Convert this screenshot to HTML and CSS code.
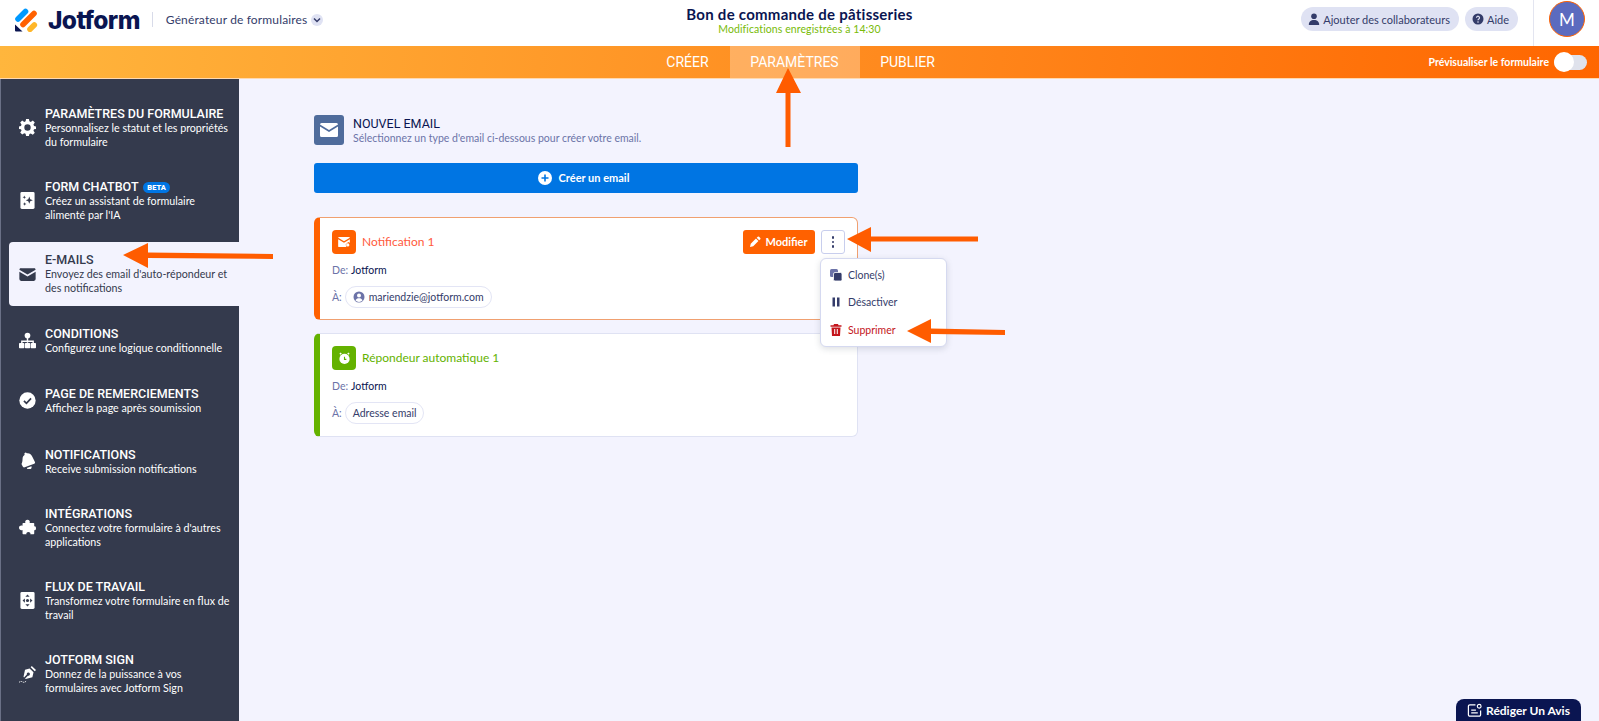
FILE: index.html
```html
<!DOCTYPE html>
<html lang="fr">
<head>
<meta charset="utf-8">
<title>Jotform</title>
<link rel="stylesheet" href="styles.css">
</head>
<body>
<header class="top">
  <div class="top-left">
    <svg class="logo" viewBox="0 0 24 24" width="24" height="24"><g fill="none" stroke-width="5.6" stroke-linecap="round"><path stroke="#0099ff" d="M4 11 11.500 3.500"/><path stroke="#ff6100" d="M9 16.500 20 5.500"/><path stroke="#ffb629" d="M16 21.300 20.300 17"/></g><path fill="#0a1551" d="M1 16.500v6a1 1 0 0 0 1 1h6.500z"/></svg>
    <span class="wordmark">Jotform</span>
    <span class="top-sep"></span>
    <span class="builder">Générateur de formulaires</span>
    <span class="chev"><svg viewBox="0 0 12 12" width="12" height="12"><path d="M3 4.500 6 7.500 9 4.500" fill="none" stroke="#343c6a" stroke-width="1.500"/></svg></span>
  </div>
  <div class="top-mid">
    <div class="form-title">Bon de commande de pâtisseries</div>
    <div class="saved">Modifications enregistrées à 14:30</div>
  </div>
  <div class="top-right">
    <span class="pill"><svg viewBox="0 0 12 12" width="12" height="12"><circle cx="6" cy="3.200" r="2.800" fill="#343c6a"/><path d="M.8 12c0-3.500 2-5 5.200-5s5.200 1.500 5.200 5z" fill="#343c6a"/></svg>Ajouter des collaborateurs</span>
    <span class="pill"><svg viewBox="0 0 12 12" width="12" height="12"><circle cx="6" cy="6" r="5.500" fill="#343c6a"/><path d="M4.500 4.700a1.500 1.500 0 1 1 2.300 1.300C6.200 6.400 6 6.700 6 7.300" fill="none" stroke="#dfe2f3" stroke-width="1.200"/><circle cx="6" cy="9" r=".8" fill="#dfe2f3"/></svg>Aide</span>
    <span class="vline"></span>
    <span class="avatar">M</span>
  </div>
</header>

<nav class="bar">
  <div class="bar-side"></div>
  <div class="tabs">
    <span class="tab tab-first">CRÉER</span>
    <span class="tab tab-on">PARAMÈTRES</span>
    <span class="tab tab-last">PUBLIER</span>
  </div>
  <div class="bar-side bar-end">
    <span class="preview">Prévisualiser le formulaire</span>
    <span class="toggle"><span class="knob"></span></span>
  </div>
</nav>

<div class="body">
  <aside class="side">
    <div class="item">
      <svg class="ic" viewBox="0 0 24 24"><path fill="#fff" fill-rule="evenodd" d="M10 0h4l.7 3.300 1.900.8L19.500 2.200l2.800 2.800-1.900 2.900.8 1.900L24 10.500v3.500l-2.800.6-.8 1.900 1.900 2.900-2.800 2.800-2.900-1.900-1.900.8L14 24h-4l-.7-3.200-1.900-.8-2.900 1.900-2.800-2.800 1.900-2.900-.8-1.900L0 14v-3.500l2.800-.6.800-1.900L1.700 5l2.800-2.800 2.900 1.900 1.900-.8zM12 7.500a4.500 4.500 0 1 0 0 9 4.500 4.500 0 0 0 0-9z"/></svg>
      <div class="txt"><div class="t">PARAMÈTRES DU FORMULAIRE</div><div class="d">Personnalisez le statut et les propriétés du formulaire</div></div>
    </div>
    <div class="item item-up">
      <svg class="ic" viewBox="0 0 24 24"><rect x="2" y="0" width="20" height="24" rx="2" fill="#fff"/><path fill="#343a4d" d="M14.500 6.500l1.400 3.600 3.600 1.400-3.600 1.400-1.400 3.600-1.400-3.600-3.600-1.400 3.600-1.400zM7.500 5l.7 1.800 1.800.7-1.800.7L7.500 10l-.7-1.800L5 7.500l1.800-.7zM8 14.500l.8 1.700 1.700.8-1.700.8L8 19.500l-.8-1.700-1.700-.8 1.700-.8z"/></svg>
      <div class="txt"><div class="t">FORM CHATBOT <span class="beta">BETA</span></div><div class="d">Créez un assistant de formulaire alimenté par l'IA</div></div>
    </div>
    <div class="item item-on item-up">
      <svg class="ic" viewBox="0 0 24 24"><path fill="#343a4d" d="M3 3h18a2.500 2.500 0 0 1 2.500 2.300L12 12 .5 5.300A2.500 2.500 0 0 1 3 3zM.5 8 12 14.700 23.500 8v10.500A2.500 2.500 0 0 1 21 21H3a2.500 2.500 0 0 1-2.500-2.500z"/></svg>
      <div class="txt"><div class="t">E-MAILS</div><div class="d">Envoyez des email d'auto-répondeur et des notifications</div></div>
    </div>
    <div class="item item-s item-up">
      <svg class="ic" viewBox="0 0 24 24"><circle cx="12" cy="5" r="4" fill="#fff"/><path fill="none" stroke="#fff" stroke-width="2" d="M12 8v7M4 16v-3h16v3"/><rect x="0" y="15.500" width="7.500" height="7.500" rx="1" fill="#fff"/><rect x="8.300" y="15.500" width="7.500" height="7.500" rx="1" fill="#fff"/><rect x="16.500" y="15.500" width="7.500" height="7.500" rx="1" fill="#fff"/></svg>
      <div class="txt"><div class="t">CONDITIONS</div><div class="d">Configurez une logique conditionnelle</div></div>
    </div>
    <div class="item item-s item-page">
      <svg class="ic" viewBox="0 0 24 24"><circle cx="12" cy="12" r="11.500" fill="#fff"/><path d="M7 12.500 10.500 16 17 9" fill="none" stroke="#343a4d" stroke-width="2.400"/></svg>
      <div class="txt"><div class="t">PAGE DE REMERCIEMENTS</div><div class="d">Affichez la page après soumission</div></div>
    </div>
    <div class="item item-s">
      <svg class="ic" viewBox="0 0 24 24"><path fill="#fff" d="M8 1.500a2 2 0 0 1 3 .2c4-.5 6.500 1.800 8 5.300l3.500 7c.5 1.300 0 2.200-1 2.700l-13.500 5c-1 .3-2 0-2.500-1L3.500 17c1-2 1.500-4 1.500-7 0-3 1.500-5 3.200-6a2 2 0 0 1-.2-2.500zM11 22.500l6.500-2.400a3.400 3.400 0 0 1-6.500 2.400z"/></svg>
      <div class="txt"><div class="t">NOTIFICATIONS</div><div class="d">Receive submission notifications</div></div>
    </div>
    <div class="item">
      <svg class="ic" viewBox="0 0 24 24"><path fill="#fff" d="M9 5.500C8 3 9.500 1 12 1s4 2 3 4.500h5.500a1 1 0 0 1 1 1v4c1.500-.8 2.500.5 2.500 2.500s-1 3.300-2.500 2.500v5a1 1 0 0 1-1 1H16c.7-2-.7-3.300-2.700-3.300s-3.500 1.300-2.800 3.300H6a1 1 0 0 1-1-1v-5C3 16.500 0 15.500 0 12.500S3 8.500 5 9.500v-3a1 1 0 0 1 1-1z"/></svg>
      <div class="txt"><div class="t">INTÉGRATIONS</div><div class="d">Connectez votre formulaire à d'autres applications</div></div>
    </div>
    <div class="item item-up">
      <svg class="ic" viewBox="0 0 24 24"><rect x="2" y="0" width="20" height="24" rx="2" fill="#fff"/><path fill="#343a4d" d="M12 3.500l3 3.300h-6zM12 20.500l-3-3.300h6zM5 12l3.300-3v6zM19 12l-3.300 3V9z"/><circle cx="12" cy="12" r="2.200" fill="#343a4d"/></svg>
      <div class="txt"><div class="t">FLUX DE TRAVAIL</div><div class="d">Transformez votre formulaire en flux de travail</div></div>
    </div>
    <div class="item item-up">
      <svg class="ic" viewBox="0 0 24 24"><path fill="#fff" d="M18 0l6 5.500-1.800 1.800-5.700-5.500z"/><path fill="#fff" fill-rule="evenodd" d="M15 3.500l5.500 5.300-1.600 7L9.500 18.500l-.9-.9 4-4a2.200 2.200 0 1 0-1.500-1.500l-4 4-.7-.8L8.500 5.300z"/><path fill="none" stroke="#fff" stroke-width="1.200" stroke-dasharray="2 1" d="M0 23c2-1.500 3.500-1.500 5-.5s3.500.5 5-1"/></svg>
      <div class="txt"><div class="t">JOTFORM SIGN</div><div class="d">Donnez de la puissance à vos formulaires avec Jotform Sign</div></div>
    </div>
  </aside>

  <main class="main">
    <div class="col">
      <div class="new">
        <span class="new-ic"><svg viewBox="0 0 18 14" width="18" height="14"><path fill="#fff" d="M1.500 0h15A1.500 1.500 0 0 1 18 1.500L9 7 0 1.500A1.500 1.500 0 0 1 1.500 0zM0 3.500 9 9l9-5.500v9a1.500 1.500 0 0 1-1.500 1.500h-15A1.500 1.500 0 0 1 0 12.500z"/></svg></span>
        <div>
          <div class="new-t">NOUVEL EMAIL</div>
          <div class="new-d">Sélectionnez un type d'email ci-dessous pour créer votre email.</div>
        </div>
      </div>
      <button class="create"><svg viewBox="0 0 14 14" width="14" height="14"><circle cx="7" cy="7" r="7" fill="#fff"/><path d="M7 3.500v7M3.500 7h7" stroke="#0075e3" stroke-width="1.600"/></svg>Créer un email</button>

      <section class="card card-o">
        <div class="card-h">
          <span class="badge badge-o"><svg viewBox="0 0 14 12" width="12" height="10"><path fill="#fff" d="M1 0h12a1 1 0 0 1 1 1L7 5 0 1a1 1 0 0 1 1-1zM0 2.800l7 4 7-4V7l-2-1-3 3 .8 3H1a1 1 0 0 1-1-1z"/><circle cx="11.500" cy="9.500" r="2" fill="#fff"/></svg></span>
          <span class="name name-o">Notification 1</span>
          <span class="edit"><svg viewBox="0 0 12 12" width="11" height="11"><path fill="#fff" d="M8.500.8a1 1 0 0 1 1.400 0l1.300 1.300a1 1 0 0 1 0 1.400L10 4.700 7.300 2zM6.500 2.800 9.200 5.500 3.500 11.200 0 12l.8-3.500z"/></svg>Modifier</span>
          <span class="more"><i></i><i></i><i></i></span>
        </div>
        <div class="line"><span class="k">De:</span><span class="v">Jotform</span></div>
        <div class="line"><span class="k">À:</span><span class="chip"><svg viewBox="0 0 12 12" width="12" height="12"><circle cx="6" cy="6" r="5.500" fill="#6c73a8"/><circle cx="6" cy="4.500" r="2" fill="#fff"/><path d="M2.500 9.500c.5-1.700 2-2.300 3.500-2.300s3 .6 3.500 2.300A5 5 0 0 1 6 11a5 5 0 0 1-3.500-1.500z" fill="#fff"/></svg>mariendzie@jotform.com</span></div>
      </section>

      <section class="card card-g">
        <div class="card-h">
          <span class="badge badge-g"><svg viewBox="0 0 14 14" width="13" height="13"><circle cx="7" cy="7.500" r="5.500" fill="#fff"/><path d="M2 2.500 3.500 1M12 2.500 10.500 1" stroke="#fff" stroke-width="1.600"/><path d="M7 5v3h2" fill="none" stroke="#64b200" stroke-width="1.200"/></svg></span>
          <span class="name name-g">Répondeur automatique 1</span>
        </div>
        <div class="line"><span class="k">De:</span><span class="v">Jotform</span></div>
        <div class="line"><span class="k">À:</span><span class="chip">Adresse email</span></div>
      </section>
    </div>

    <div class="menu">
      <div class="mi"><svg viewBox="0 0 12 12" width="12" height="12"><rect x="0" y="0" width="8" height="8" rx="1.500" fill="#6c73a8"/><rect x="3.500" y="3.500" width="8.500" height="8.500" rx="1.500" fill="#343c6a" stroke="#fff" stroke-width=".8"/></svg>Clone(s)</div>
      <div class="mi"><svg viewBox="0 0 12 12" width="12" height="12"><rect x="2.500" y="1.500" width="2.500" height="9" fill="#343c6a"/><rect x="7" y="1.500" width="2.500" height="9" fill="#343c6a"/></svg>Désactiver</div>
      <div class="mi mi-del"><svg viewBox="0 0 12 12" width="12" height="12"><path fill="#c4161c" d="M4 0h4l.5 1.300H11.500v1.400H.5V1.300h3zM1.500 3.500h9L10 12H2zM4.200 5v5h1V5zM6.800 5v5h1V5z"/></svg>Supprimer</div>
    </div>
  </main>
</div>

<div class="review"><svg viewBox="0 0 16 16" width="15" height="15"><path fill="none" stroke="#fff" stroke-width="1.300" d="M9 2H3a1.500 1.500 0 0 0-1.500 1.500v9A1.500 1.500 0 0 0 3 14h10a1.500 1.500 0 0 0 1.500-1.500V8M4.500 7.500h5M4.500 10.500h7"/><circle cx="13" cy="3.500" r="2" fill="none" stroke="#fff" stroke-width="1.200"/></svg>Rédiger Un Avis</div>

<svg class="arrows" width="1599" height="721" viewBox="0 0 1599 721">
  <g fill="#ff5c00">
    <path d="M788 68 801 93H790.500V147H785.500V93H776z"/>
    <path d="M123 255 148 243V252.500L273 254V259L148 258V268z"/>
    <path d="M847 239 871 227V236.500H978V241.500H871V252z"/>
    <path d="M907 331 931 319V328.500L1005 330V335L931 334V343z"/>
  </g>
</svg>
</body>
</html>
```

FILE: styles.css
```css
* { box-sizing: border-box; }
html, body { margin: 0; height: 721px; overflow: hidden; }
body { font-family: "Lato", "Liberation Sans", sans-serif; background: #f3f3fe; color: #0a1551; position: relative; }

.top { height: 46px; background: #fff; display: grid; grid-template-columns: 1fr auto 1fr; align-items: center; }
.top-left { display: flex; align-items: center; padding: 0 0 7px 14px; }
.logo { display: block; }
.wordmark { font-family: "Inter", sans-serif; font-weight: 800; font-size: 24.500px; letter-spacing: -.6px; margin-left: 10px; color: #0a1551; }
.top-sep { width: 1px; height: 15px; background: #d8dbe9; margin: 0 13px 0 12px; }
.builder { font-size: 12px; color: #343c6a; letter-spacing: .15px; }
.chev { width: 12px; height: 12px; border-radius: 50%; background: #dfe2f3; margin-left: 4px; display: flex; }
.top-mid { text-align: center; align-self: start; padding-top: 4px; }
.form-title { font-weight: 700; font-size: 15px; line-height: 20px; letter-spacing: .26px; }
.saved { font-size: 10.500px; line-height: 10px; color: #78bb07; letter-spacing: .09px; }
.top-right { display: flex; align-items: flex-start; justify-content: flex-end; height: 46px; padding-right: 14px; }
.pill { height: 24px; margin-top: 7px; margin-right: 6px; padding: 0 9px 0 7px; border-radius: 12px; background: #dfe2f3; display: flex; align-items: center; gap: 3px; font-size: 11px; color: #343c6a; }
.vline { width: 1px; height: 46px; background: #e3e5f0; margin: 0 15px 0 9px; }
.avatar { width: 36px; height: 36px; margin-top: 1px; border-radius: 50%; background: #5b6bbf; border: 1px solid #ff6100; color: #fff; font-size: 17px; display: flex; align-items: center; justify-content: center; }

.bar { height: 33px; display: grid; grid-template-columns: 1fr auto 1fr; background: linear-gradient(95deg, #ffb63d 0%, #ff8a1e 55%, #ff6600 100%); border-bottom: 1px solid #ffd9b0; }
.tabs { display: flex; }
.tab { height: 32px; display: flex; align-items: center; justify-content: center; font-family: "Roboto", sans-serif; font-size: 14px; color: #fff; }
.tab-first { width: 84px; }
.tab-on { width: 130px; background: rgba(255,255,255,.28); }
.tab-last { width: 94px; padding-left: 2px; }
.bar-end { display: flex; align-items: center; justify-content: flex-end; padding-right: 12px; height: 32px; }
.preview { font-size: 10.500px; font-weight: 700; color: #fff; margin-right: 5px; }
.toggle { width: 33px; height: 15px; border-radius: 8px; background: #dfe2ec; display: flex; align-items: center; }
.knob { width: 20px; height: 20px; border-radius: 50%; background: #fff; }

.body { display: flex; height: 642px; }
.side { width: 239px; flex: none; background: #343a4d; border-left: 1px solid #6a7086; padding: 16px 0 0 8px; display: flex; flex-direction: column; gap: 9.500px; overflow: hidden; }
.item { min-height: 64px; padding-left: 10px; display: flex; align-items: center; gap: 9px; color: #fff; border-radius: 4px 0 0 4px; }
.item-s { min-height: 50px; }
.item-page { min-height: 51px; }
.item-on { background: #f3f3fe; color: #343a4d; }
.ic { width: 17px; height: 17px; flex: none; }
.txt { align-self: flex-start; margin-top: 11px; width: 188px; }
.item-up .txt { margin-top: 10px; }
.t { font-family: "Roboto", sans-serif; font-weight: 500; font-size: 12.500px; line-height: 15px; }
.d { font-size: 10.700px; line-height: 14px; }
.beta { display: inline-block; vertical-align: 1px; background: #0075e3; color: #fff; font-size: 7.500px; font-weight: 900; line-height: 11px; height: 11px; padding: 0 4px; border-radius: 6px; margin-left: 2px; }

.main { flex: 1; position: relative; padding: 36px 0 0 75px; }
.col { width: 544px; }
.new { display: flex; align-items: center; gap: 9px; height: 30px; }
.new-ic { width: 30px; height: 30px; border-radius: 3px; background: #4f6c9c; display: flex; align-items: center; justify-content: center; }
.new-t { font-family: "Roboto", sans-serif; font-size: 12.500px; line-height: 15px; color: #0a1551; }
.new-d { font-size: 10.500px; line-height: 14px; color: #6c73a8; }
.create { display: flex; align-items: center; justify-content: center; gap: 7px; width: 100%; height: 30px; margin-top: 18px; padding: 0 5px 1px 0; border: 0; border-radius: 3px; background: #0075e3; color: #fff; font: 700 11px "Lato", sans-serif; }
.card { background: #fff; border: 1px solid #dfe2f3; border-left: 6px solid; border-radius: 6px; padding: 12px 12px 0 12px; height: 104px; }
.card-o { margin-top: 24px; height: 103px; border-color: #f0a070 #f0a070 #f0a070 #ff6100; }
.card-g { margin-top: 13px; border-left-color: #64b200; }
.card-h { display: flex; align-items: center; height: 24px; }
.badge { width: 24px; height: 24px; border-radius: 4px; display: flex; align-items: center; justify-content: center; }
.badge-o { background: #ff6100; }
.badge-g { background: #64b200; }
.name { font-size: 12px; margin-left: 6px; margin-top: -1px; }
.name-o { color: #ff5a3c; }
.name-g { color: #64b200; }
.edit { margin-left: auto; width: 72px; height: 24px; border-radius: 3px; background: #ff6100; color: #fff; font-size: 11px; font-weight: 700; display: flex; align-items: center; justify-content: center; gap: 4px; padding-bottom: 1px; }
.more { width: 24px; height: 24px; margin-left: 6px; border: 1px solid #c8ceed; border-radius: 3px; background: #fff; display: flex; flex-direction: column; align-items: center; justify-content: center; gap: 2px; }
.more i { width: 2.500px; height: 2.500px; border-radius: 50%; background: #343c6a; }
.line { display: flex; align-items: center; gap: 3px; height: 24px; margin-top: 3.500px; font-size: 10.500px; }
.card-h + .line { margin-top: 5px; height: 22px; }
.k { color: #6c73a8; }
.v { color: #0a1551; }
.chip { height: 22px; border: 1px solid #e3e5f5; border-radius: 11px; padding: 0 7px; display: flex; align-items: center; gap: 4px; color: #343c6a; font-size: 10.500px; }
.menu { position: absolute; left: 581px; top: 179px; width: 127px; height: 89px; background: #fff; border: 1px solid #d5d9f0; border-radius: 6px; box-shadow: 0 2px 6px rgba(84,95,111,.2); padding: 2px 0 0 9px; }
.mi { height: 27.500px; display: flex; align-items: center; gap: 6px; font-size: 10.500px; color: #343c6a; }
.mi-del { color: #c4161c; }

.review { position: absolute; left: 1456px; top: 699px; width: 125px; height: 22px; background: #0a1551; color: #fff; border-radius: 8px 8px 0 0; font-size: 12px; font-weight: 700; display: flex; align-items: center; justify-content: center; gap: 4px; }
.arrows { position: absolute; left: 0; top: 0; pointer-events: none; }
```
